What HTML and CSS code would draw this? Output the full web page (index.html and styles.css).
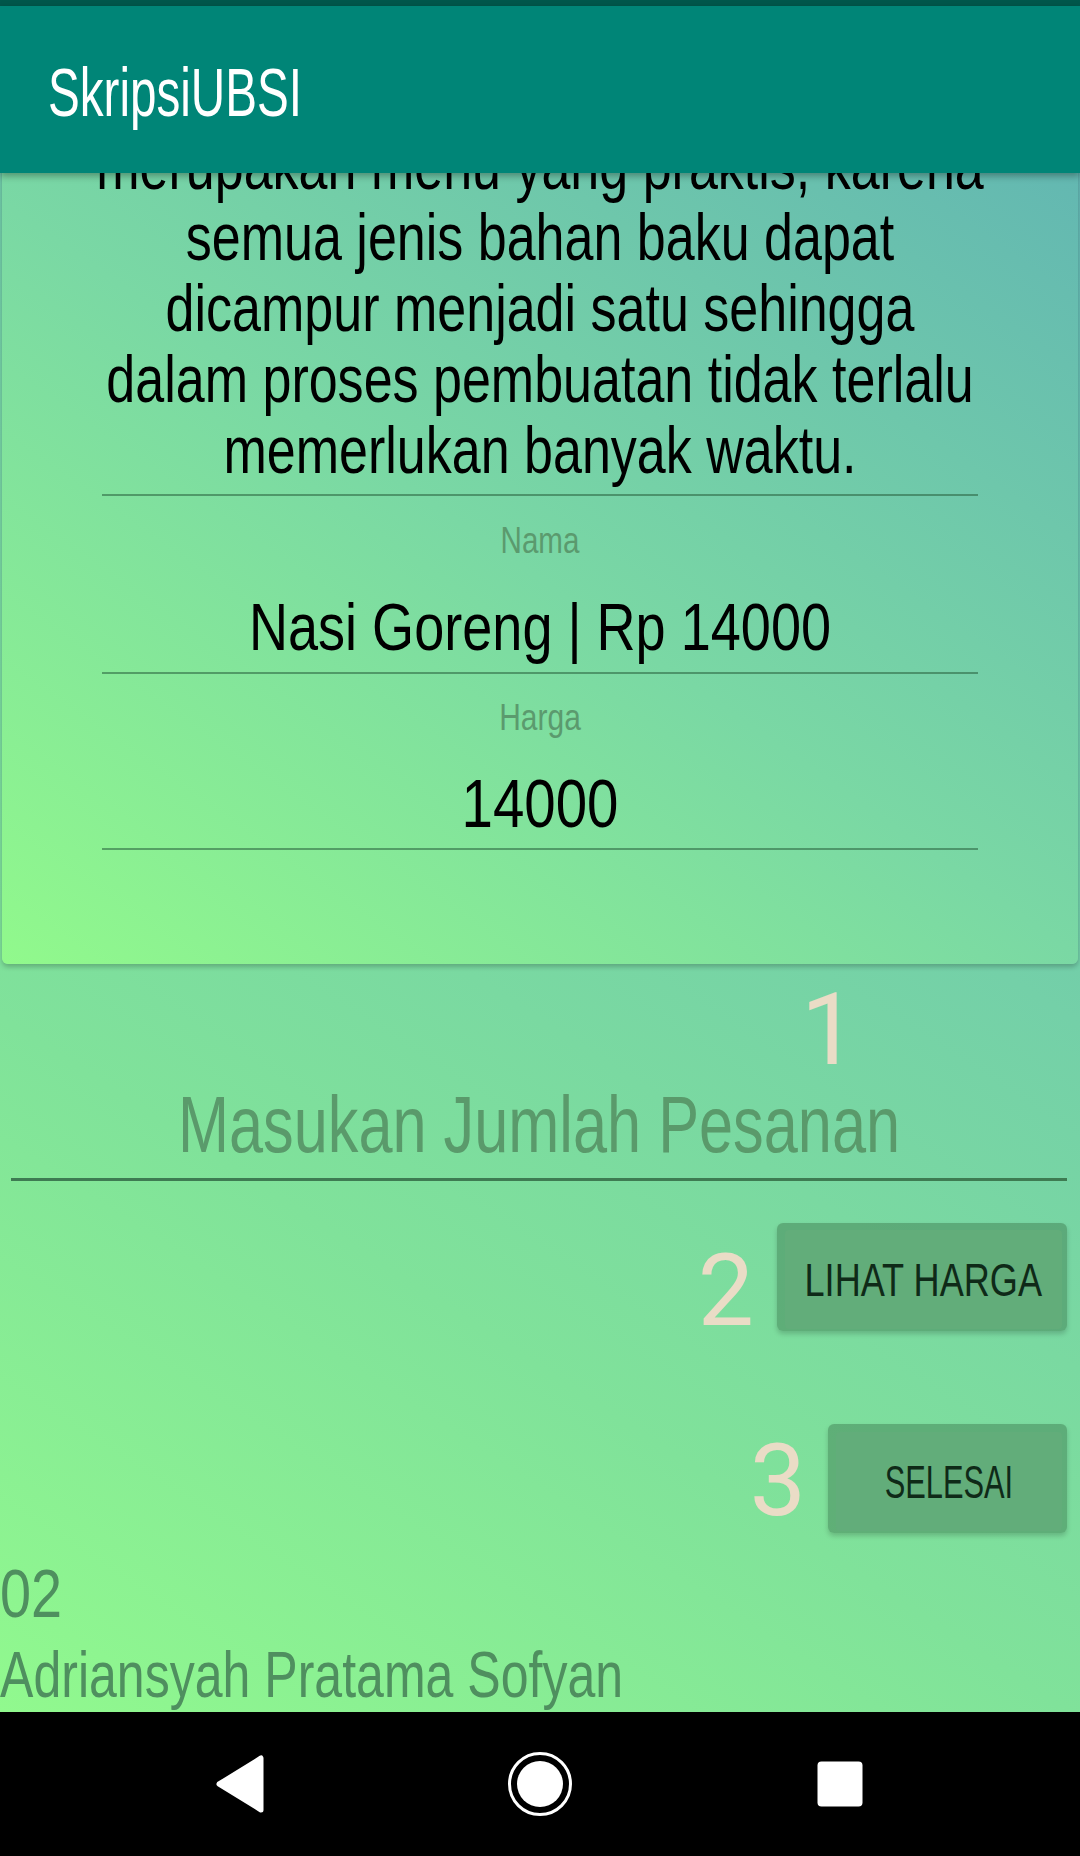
FILE: index.html
```html
<!DOCTYPE html>
<html lang="id">
<head>
<meta charset="utf-8">
<title>SkripsiUBSI</title>
<link rel="stylesheet" href="styles.css">
</head>
<body>
<div class="screen">
  <div class="statusbar"></div>
  <header class="appbar"><span class="app-title">SkripsiUBSI</span></header>
  <main class="content">
    <section class="card">
      <div class="desc">
        <span class="desc-line">merupakan menu yang praktis, karena</span>
        <span class="desc-line">semua jenis bahan baku dapat</span>
        <span class="desc-line">dicampur menjadi satu sehingga</span>
        <span class="desc-line">dalam proses pembuatan tidak terlalu</span>
        <span class="desc-line">memerlukan banyak waktu.</span>
      </div>
      <div class="divider divider-first"></div>
      <div class="field-label label-nama">Nama</div>
      <div class="field-value value-nama">Nasi Goreng | Rp 14000</div>
      <div class="divider"></div>
      <div class="field-label label-harga">Harga</div>
      <div class="field-value value-harga">14000</div>
      <div class="divider divider-last"></div>
    </section>
    <div class="step-one"><span class="step">1</span></div>
    <div class="qty-input"><span class="hint">Masukan Jumlah Pesanan</span></div>
    <div class="action-row row-lihat">
      <span class="step step-two">2</span>
      <div class="btn-frame frame-lihat"><button class="btn"><span class="btn-text text-lihat">LIHAT HARGA</span></button></div>
    </div>
    <div class="action-row row-selesai">
      <span class="step step-three">3</span>
      <div class="btn-frame frame-selesai"><button class="btn"><span class="btn-text text-selesai">SELESAI</span></button></div>
    </div>
    <div class="nim">02</div>
    <div class="author">Adriansyah Pratama Sofyan</div>
  </main>
  <nav class="navbar">
    <div class="nav-cell">
      <svg width="48" height="58" viewBox="0 0 48 58"><polygon points="3,29 45,3 45,55" fill="#fff" stroke="#fff" stroke-width="5" stroke-linejoin="round"/></svg>
    </div>
    <div class="nav-cell">
      <svg width="68" height="68" viewBox="0 0 68 68"><circle cx="34" cy="34" r="30.5" fill="none" stroke="#fff" stroke-width="3"/><circle cx="34" cy="34" r="23" fill="#fff"/></svg>
    </div>
    <div class="nav-cell">
      <svg width="46" height="46" viewBox="0 0 46 46"><rect x="0.5" y="0.5" width="45" height="45" rx="4" fill="#fff"/></svg>
    </div>
  </nav>
</div>
</body>
</html>
```

FILE: styles.css
```css
* { box-sizing: border-box; }
html, body {
  margin: 0;
  padding: 0;
  width: 1080px;
  height: 1856px;
  overflow: hidden;
}
body {
  font-family: "Liberation Sans", Arial, sans-serif;
}
.screen {
  width: 1080px;
  height: 1856px;
  display: flex;
  flex-direction: column;
}
.statusbar {
  height: 6px;
  background: #00574b;
  flex: none;
}
.appbar {
  height: 167px;
  flex: none;
  background: #008577;
  position: relative;
  z-index: 2;
  box-shadow: 0 3px 7px rgba(0, 0, 0, 0.32);
  display: flex;
  align-items: center;
  padding: 4px 0 0 48px;
}
.app-title {
  display: inline-block;
  color: #ffffff;
  font-size: 68px;
  line-height: 68px;
  white-space: nowrap;
  transform: scaleX(0.70);
  transform-origin: left center;
}
.content {
  flex: 1;
  overflow: hidden;
  display: flex;
  flex-direction: column;
  background: linear-gradient(213deg, #63b6b4 0%, #74d0a8 38%, #80e29a 69%, #91f98e 100%);
}
.card {
  margin: -42px 2px 0 2px;
  padding: 0 100px 114px 100px;
  border-radius: 0 0 6px 6px;
  background: linear-gradient(215deg, #62b6b2 0%, #7ad8a4 52%, #91f98c 100%);
  box-shadow: 0 3px 5px rgba(0, 0, 0, 0.22);
  flex: none;
}
.desc {
  display: flex;
  flex-direction: column;
  align-items: center;
  font-size: 66px;
  line-height: 71px;
  color: #000;
  transform: scaleX(0.788);
  transform-origin: center;
}
.desc-line {
  display: block;
  white-space: nowrap;
}
.divider {
  height: 2px;
  margin-top: 7px;
  background: rgba(40, 95, 60, 0.55);
}
.divider-first { margin-top: 8px; }
.divider-last { margin-top: 7px; }
.field-label {
  font-size: 37px;
  line-height: 42px;
  text-align: center;
  white-space: nowrap;
  color: #5b9a6e;
  transform-origin: center;
}
.label-nama { margin-top: 24px; transform: scaleX(0.80); }
.label-harga { margin-top: 23px; transform: scaleX(0.81); }
.field-value {
  line-height: 76px;
  text-align: center;
  white-space: nowrap;
  color: #000;
  transform-origin: center;
}
.value-nama { margin-top: 27px; font-size: 67px; transform: scaleX(0.807); }
.value-harga { margin-top: 26px; font-size: 68px; transform: scaleX(0.83); }
.step {
  font-family: Roboto, "Liberation Sans", sans-serif;
  font-size: 100px;
  line-height: 80px;
  color: #eadcc6;
  flex: none;
}
.step-one {
  margin-top: 30px;
  padding-left: 801px;
  display: flex;
}
.step-one .step { line-height: 72px; }
.qty-input {
  margin: 27px 13px 0 11px;
  padding-bottom: 21px;
  border-bottom: 3px solid #3e7b52;
}
.hint {
  display: block;
  font-size: 80px;
  line-height: 64px;
  text-align: center;
  white-space: nowrap;
  color: #5a9a6b;
  transform: scaleX(0.766);
  transform-origin: center;
}
.action-row {
  display: flex;
  justify-content: flex-end;
  align-items: flex-start;
  padding-right: 13px;
}
.row-lihat { margin-top: 42px; }
.row-selesai { margin-top: 93px; }
.step-two { margin: 28px 23px 0 0; }
.step-three { margin: 17px 22px 0 0; }
.btn-frame {
  background: rgba(70, 135, 90, 0.55);
  border-radius: 6px;
  box-shadow: 0 3px 5px rgba(0, 0, 0, 0.18);
}
.frame-lihat { width: 290px; height: 108px; padding: 7px 5px 2px 8px; }
.frame-selesai { width: 239px; height: 109px; padding: 8px 5px 2px 8px; }
.btn {
  display: flex;
  align-items: center;
  justify-content: center;
  width: 100%;
  height: 99px;
  border: none;
  border-radius: 4px;
  background: #62ad7a;
  color: #0f2a18;
  font-family: inherit;
  font-size: 46px;
  line-height: 46px;
  padding: 0;
}
.btn-text {
  display: block;
  flex: none;
  white-space: nowrap;
  transform-origin: center;
}
.text-lihat { transform: scaleX(0.785); }
.text-selesai { transform: scaleX(0.67); }
.nim {
  margin-top: 21px;
  font-size: 68px;
  line-height: 78px;
  color: #4f8f5f;
  transform: scaleX(0.82);
  transform-origin: left center;
}
.author {
  margin-top: 8px;
  font-size: 65px;
  line-height: 70px;
  color: #4f8f5f;
  white-space: nowrap;
  transform: scaleX(0.77);
  transform-origin: left center;
}
.navbar {
  height: 144px;
  flex: none;
  background: #000;
  display: flex;
  justify-content: center;
  align-items: center;
}
.nav-cell {
  width: 300px;
  display: flex;
  justify-content: center;
  align-items: center;
}
```
